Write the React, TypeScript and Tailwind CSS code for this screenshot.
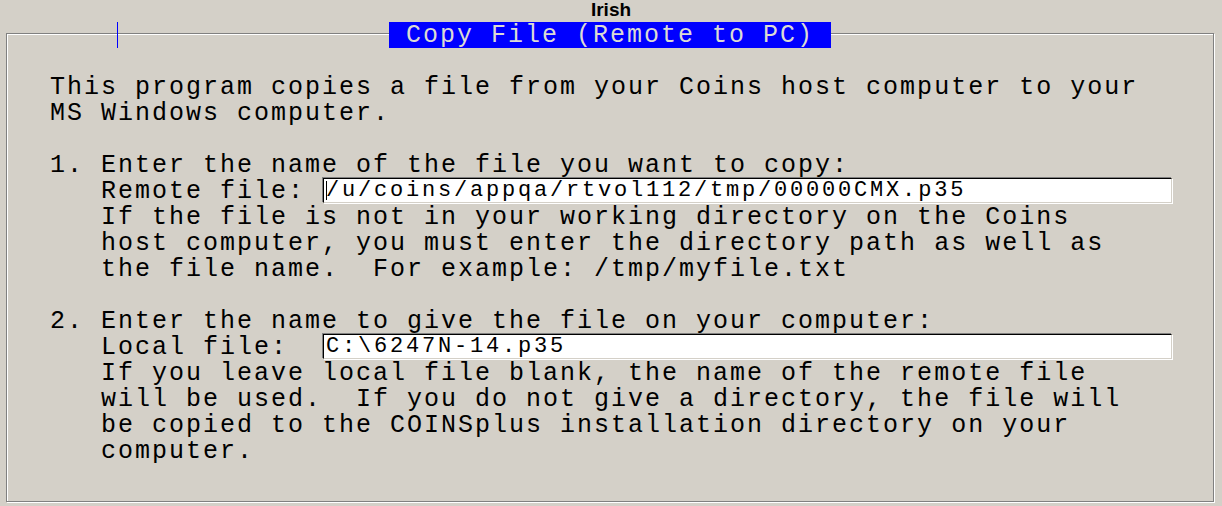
import React from 'react';

const mono = "font-['Liberation_Mono','DejaVu_Sans_Mono',monospace]";

const Line = ({ text }: { text: string }) => (
    <div className="h-[26px] whitespace-pre text-[25px] leading-[26px] tracking-[2px]">{text}</div>
);

const FieldLine = ({ label, value, caret }: { label: string; value: string; caret?: boolean }) => (
    <div className="flex h-[26px] items-start">
        <span className="h-[26px] whitespace-pre text-[25px] leading-[26px] tracking-[2px]">{label}</span>
        <div className="relative -mt-px ml-px h-[25px] w-[849px] border-t border-l border-black border-r border-b border-r-[#d4d0c8] border-b-[#d4d0c8] bg-white shadow-[-1px_-1px_0_#808080,1px_1px_0_#ffffff]">
            {caret && <span className="absolute left-[2px] top-[2px] h-[19px] w-px bg-black" />}
            <div className="whitespace-pre pl-[2px] text-[22px] leading-[23px] tracking-[2.8px]">{value}</div>
        </div>
    </div>
);

export default function App() {
    return (
        <div className="h-[506px] w-[1222px] overflow-hidden bg-[#d4d0c8] text-black">
            <div className="h-[33px] text-center font-['Liberation_Sans',Arial,sans-serif] text-[19px] font-bold leading-[19px]">
                Irish
            </div>
            <div className={`ml-[6px] h-[469px] w-[1208px] border border-[#808080] shadow-[inset_1px_1px_0_#ffffff,1px_1px_0_#ffffff] ${mono}`}>
                <div className="relative -mt-[12px] flex justify-center">
                    {/* stray cursor mark on the frame */}
                    <span className="absolute left-[110px] top-0 h-[26px] w-px bg-[#0000ff]" />
                    <div className="h-[26px] whitespace-pre bg-[#0000ff] px-[17px] pt-px text-[25px] leading-[25px] tracking-[2px] text-[#dcdad4]">
                        Copy File (Remote to PC)
                    </div>
                </div>
                <div className="mt-[27px] pl-[43px]">
                    <Line text="This program copies a file from your Coins host computer to your" />
                    <Line text="MS Windows computer." />
                    <Line text="" />
                    <Line text="1. Enter the name of the file you want to copy:" />
                    <FieldLine label="   Remote file: " value="/u/coins/appqa/rtvol112/tmp/00000CMX.p35" caret />
                    <Line text="   If the file is not in your working directory on the Coins" />
                    <Line text="   host computer, you must enter the directory path as well as" />
                    <Line text="   the file name.  For example: /tmp/myfile.txt" />
                    <Line text="" />
                    <Line text="2. Enter the name to give the file on your computer:" />
                    <FieldLine label="   Local file:  " value="C:\6247N-14.p35" />
                    <Line text="   If you leave local file blank, the name of the remote file" />
                    <Line text="   will be used.  If you do not give a directory, the file will" />
                    <Line text="   be copied to the COINSplus installation directory on your" />
                    <Line text="   computer." />
                </div>
            </div>
        </div>
    );
}
